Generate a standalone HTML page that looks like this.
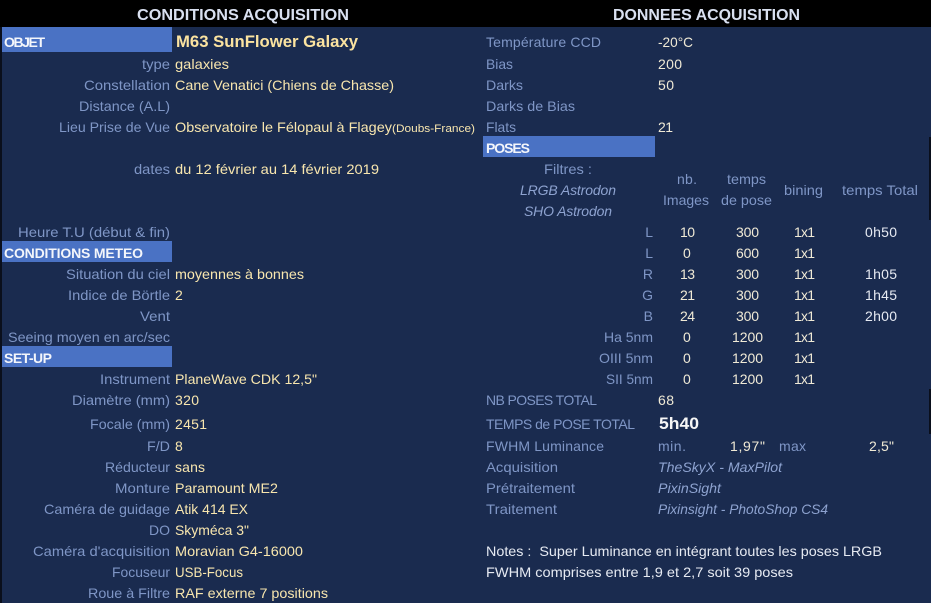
<!DOCTYPE html>
<html><head><meta charset="utf-8"><style>
html,body{margin:0;padding:0;background:#1a2b4f}
svg{display:block}
text{font-family:"Liberation Sans",sans-serif;font-size:14px}
.l{fill:#7f96c6}
.v{fill:#f8e6ae}
.w{fill:#f0ead6}
.n{fill:#e6eaf2}
.i{font-style:italic;fill:#8ea3d0}
.b{font-weight:bold;fill:#f4f6fb}
.t{font-weight:bold;fill:#d9e0f0;font-size:16px}
</style></head><body>
<svg width="931" height="603" viewBox="0 0 931 603" xmlns="http://www.w3.org/2000/svg">
<rect width="931" height="603" fill="#1a2b4f"/>
<rect width="931" height="27" fill="#000"/>
<rect x="0" y="27" width="2" height="576" fill="#0a0f1c"/>
<rect x="929" y="137" width="2" height="83" fill="#0a0f1c"/>
<rect x="929" y="389" width="2" height="45" fill="#0a0f1c"/>
<rect x="2" y="27" width="170" height="25" fill="#4a72c4"/>
<rect x="2" y="241" width="170" height="21" fill="#4a72c4"/>
<rect x="2" y="346" width="170" height="21" fill="#4a72c4"/>
<rect x="483" y="136" width="172" height="21" fill="#4a72c4"/>

<text class="t" x="137" y="20" textLength="212" lengthAdjust="spacingAndGlyphs">CONDITIONS ACQUISITION</text>
<text class="t" x="613" y="20" textLength="187" lengthAdjust="spacingAndGlyphs">DONNEES ACQUISITION</text>

<text class="b" x="4" y="47" textLength="41" lengthAdjust="spacing">OBJET</text>
<text class="b" x="4" y="258" textLength="139" lengthAdjust="spacing">CONDITIONS METEO</text>
<text class="b" x="4" y="363" textLength="48" lengthAdjust="spacing">SET-UP</text>
<text class="b" x="486" y="153" textLength="44" lengthAdjust="spacing">POSES</text>

<text x="176" y="47" textLength="182" lengthAdjust="spacingAndGlyphs" style="font-weight:bold;font-size:17px;fill:#fbe3a0">M63 SunFlower Galaxy</text>

<text class="l" x="142" y="69" textLength="28" lengthAdjust="spacingAndGlyphs">type</text>
<text class="l" x="84" y="90" textLength="86" lengthAdjust="spacingAndGlyphs">Constellation</text>
<text class="l" x="79" y="111" textLength="91" lengthAdjust="spacingAndGlyphs">Distance (A.L)</text>
<text class="l" x="59" y="132" textLength="111" lengthAdjust="spacingAndGlyphs">Lieu Prise de Vue</text>
<text class="l" x="134" y="174" textLength="36" lengthAdjust="spacingAndGlyphs">dates</text>
<text class="l" x="18" y="237" textLength="152" lengthAdjust="spacingAndGlyphs">Heure T.U (début &amp; fin)</text>
<text class="l" x="66" y="279" textLength="104" lengthAdjust="spacingAndGlyphs">Situation du ciel</text>
<text class="l" x="68" y="300" textLength="102" lengthAdjust="spacingAndGlyphs">Indice de Börtle</text>
<text class="l" x="140" y="321" textLength="30" lengthAdjust="spacingAndGlyphs">Vent</text>
<text class="l" x="8" y="342" textLength="162" lengthAdjust="spacingAndGlyphs">Seeing moyen en arc/sec</text>
<text class="l" x="100" y="384" textLength="70" lengthAdjust="spacingAndGlyphs">Instrument</text>
<text class="l" x="72" y="405" textLength="98" lengthAdjust="spacingAndGlyphs">Diamètre (mm)</text>
<text class="l" x="90" y="429" textLength="80" lengthAdjust="spacingAndGlyphs">Focale (mm)</text>
<text class="l" x="147" y="451" textLength="23" lengthAdjust="spacingAndGlyphs">F/D</text>
<text class="l" x="105" y="472" textLength="65" lengthAdjust="spacingAndGlyphs">Réducteur</text>
<text class="l" x="115" y="493" textLength="55" lengthAdjust="spacingAndGlyphs">Monture</text>
<text class="l" x="44" y="514" textLength="126" lengthAdjust="spacingAndGlyphs">Caméra de guidage</text>
<text class="l" x="149" y="535" textLength="21" lengthAdjust="spacing">DO</text>
<text class="l" x="33" y="556" textLength="137" lengthAdjust="spacingAndGlyphs">Caméra d'acquisition</text>
<text class="l" x="112" y="577" textLength="58" lengthAdjust="spacingAndGlyphs">Focuseur</text>
<text class="l" x="88" y="598" textLength="82" lengthAdjust="spacingAndGlyphs">Roue à Filtre</text>

<text class="v" x="175" y="69" textLength="54" lengthAdjust="spacingAndGlyphs">galaxies</text>
<text class="v" x="175" y="90" textLength="219" lengthAdjust="spacingAndGlyphs">Cane Venatici (Chiens de Chasse)</text>
<text class="v" x="175" y="132" textLength="217" lengthAdjust="spacingAndGlyphs">Observatoire le Félopaul à Flagey</text>
<text class="v" x="392" y="132" textLength="83" lengthAdjust="spacingAndGlyphs" style="font-size:11px">(Doubs-France)</text>
<text class="v" x="175" y="174" textLength="204" lengthAdjust="spacingAndGlyphs">du 12 février au 14 février 2019</text>
<text class="v" x="175" y="279" textLength="129" lengthAdjust="spacingAndGlyphs">moyennes à bonnes</text>
<text class="v" x="175" y="300">2</text>
<text class="v" x="175" y="384" textLength="142" lengthAdjust="spacingAndGlyphs">PlaneWave CDK 12,5"</text>
<text class="v" x="175" y="405" textLength="24" lengthAdjust="spacing">320</text>
<text class="v" x="175" y="429" textLength="32" lengthAdjust="spacing">2451</text>
<text class="v" x="175" y="451">8</text>
<text class="v" x="175" y="472" textLength="30" lengthAdjust="spacing">sans</text>
<text class="v" x="175" y="493" textLength="103" lengthAdjust="spacingAndGlyphs">Paramount ME2</text>
<text class="v" x="175" y="514" textLength="73" lengthAdjust="spacingAndGlyphs">Atik 414 EX</text>
<text class="v" x="175" y="535" textLength="74" lengthAdjust="spacingAndGlyphs">Skyméca 3"</text>
<text class="v" x="175" y="556" textLength="128" lengthAdjust="spacingAndGlyphs">Moravian G4-16000</text>
<text class="v" x="175" y="577" textLength="68" lengthAdjust="spacingAndGlyphs">USB-Focus</text>
<text class="v" x="175" y="598" textLength="153" lengthAdjust="spacingAndGlyphs">RAF externe 7 positions</text>

<text class="l" x="486" y="47" textLength="115" lengthAdjust="spacing">Température CCD</text>
<text class="l" x="486" y="69" textLength="27" lengthAdjust="spacingAndGlyphs">Bias</text>
<text class="l" x="486" y="90" textLength="37" lengthAdjust="spacingAndGlyphs">Darks</text>
<text class="l" x="486" y="111" textLength="89" lengthAdjust="spacingAndGlyphs">Darks de Bias</text>
<text class="l" x="486" y="132" textLength="30" lengthAdjust="spacingAndGlyphs">Flats</text>
<text class="w" x="658" y="47" textLength="35" lengthAdjust="spacingAndGlyphs">-20°C</text>
<text class="w" x="658" y="69" textLength="24" lengthAdjust="spacing">200</text>
<text class="w" x="658" y="90" textLength="16" lengthAdjust="spacing">50</text>
<text class="w" x="658" y="132" textLength="15" lengthAdjust="spacing">21</text>

<text class="l" x="544" y="174" textLength="48" lengthAdjust="spacingAndGlyphs">Filtres :</text>
<text class="i" x="520" y="195" textLength="96" lengthAdjust="spacing">LRGB Astrodon</text>
<text class="i" x="524" y="216" textLength="88" lengthAdjust="spacing">SHO Astrodon</text>
<text class="l" x="677" y="184" textLength="20" lengthAdjust="spacing">nb.</text>
<text class="l" x="663" y="205" textLength="46" lengthAdjust="spacingAndGlyphs">Images</text>
<text class="l" x="727" y="184" textLength="39" lengthAdjust="spacingAndGlyphs">temps</text>
<text class="l" x="721" y="205" textLength="51" lengthAdjust="spacingAndGlyphs">de pose</text>
<text class="l" x="784" y="195" textLength="39" lengthAdjust="spacingAndGlyphs">bining</text>
<text class="l" x="842" y="195" textLength="76" lengthAdjust="spacingAndGlyphs">temps Total</text>

<text class="l" x="653" y="237" text-anchor="end">L</text>
<text class="l" x="653" y="258" text-anchor="end">L</text>
<text class="l" x="653" y="279" text-anchor="end">R</text>
<text class="l" x="653" y="300" text-anchor="end">G</text>
<text class="l" x="653" y="321" text-anchor="end">B</text>
<text class="l" x="604" y="342" textLength="49" lengthAdjust="spacingAndGlyphs">Ha 5nm</text>
<text class="l" x="599" y="363" textLength="54" lengthAdjust="spacingAndGlyphs">OIII 5nm</text>
<text class="l" x="606" y="384" textLength="47" lengthAdjust="spacingAndGlyphs">SII 5nm</text>

<text class="w" x="680" y="237" textLength="15" lengthAdjust="spacing">10</text>
<text class="w" x="683" y="258">0</text>
<text class="w" x="680" y="279" textLength="15" lengthAdjust="spacing">13</text>
<text class="w" x="680" y="300" textLength="15" lengthAdjust="spacing">21</text>
<text class="w" x="680" y="321" textLength="15" lengthAdjust="spacing">24</text>
<text class="w" x="683" y="342">0</text>
<text class="w" x="683" y="363">0</text>
<text class="w" x="683" y="384">0</text>

<text class="w" x="736" y="237" textLength="23" lengthAdjust="spacing">300</text>
<text class="w" x="736" y="258" textLength="23" lengthAdjust="spacing">600</text>
<text class="w" x="736" y="279" textLength="23" lengthAdjust="spacing">300</text>
<text class="w" x="736" y="300" textLength="23" lengthAdjust="spacing">300</text>
<text class="w" x="736" y="321" textLength="23" lengthAdjust="spacing">300</text>
<text class="w" x="732" y="342" textLength="31" lengthAdjust="spacing">1200</text>
<text class="w" x="732" y="363" textLength="31" lengthAdjust="spacing">1200</text>
<text class="w" x="732" y="384" textLength="31" lengthAdjust="spacing">1200</text>

<text class="w" x="794" y="237" textLength="21" lengthAdjust="spacing">1x1</text>
<text class="w" x="794" y="258" textLength="21" lengthAdjust="spacing">1x1</text>
<text class="w" x="794" y="279" textLength="21" lengthAdjust="spacing">1x1</text>
<text class="w" x="794" y="300" textLength="21" lengthAdjust="spacing">1x1</text>
<text class="w" x="794" y="321" textLength="21" lengthAdjust="spacing">1x1</text>
<text class="w" x="794" y="342" textLength="21" lengthAdjust="spacing">1x1</text>
<text class="w" x="794" y="363" textLength="21" lengthAdjust="spacing">1x1</text>
<text class="w" x="794" y="384" textLength="21" lengthAdjust="spacing">1x1</text>

<text class="n" x="865" y="237" textLength="32" lengthAdjust="spacing">0h50</text>
<text class="n" x="865" y="279" textLength="32" lengthAdjust="spacing">1h05</text>
<text class="n" x="865" y="300" textLength="32" lengthAdjust="spacing">1h45</text>
<text class="n" x="865" y="321" textLength="32" lengthAdjust="spacing">2h00</text>

<text class="l" x="486" y="405" textLength="111" lengthAdjust="spacing">NB POSES TOTAL</text>
<text class="l" x="486" y="429" textLength="149" lengthAdjust="spacing">TEMPS de POSE TOTAL</text>
<text class="l" x="486" y="451" textLength="118" lengthAdjust="spacing">FWHM Luminance</text>
<text class="l" x="486" y="472" textLength="72" lengthAdjust="spacingAndGlyphs">Acquisition</text>
<text class="l" x="486" y="493" textLength="89" lengthAdjust="spacingAndGlyphs">Prétraitement</text>
<text class="l" x="486" y="514" textLength="71" lengthAdjust="spacingAndGlyphs">Traitement</text>
<text class="w" x="658" y="405" textLength="16" lengthAdjust="spacing">68</text>
<text x="659" y="429" textLength="40" lengthAdjust="spacingAndGlyphs" style="font-weight:bold;font-size:17px;fill:#f6f6f6">5h40</text>
<text class="l" x="658" y="451" textLength="28" lengthAdjust="spacing">min.</text>
<text class="w" x="730" y="451" textLength="35" lengthAdjust="spacing">1,97"</text>
<text class="l" x="779" y="451" textLength="27" lengthAdjust="spacing">max</text>
<text class="w" x="869" y="451" textLength="25" lengthAdjust="spacing">2,5"</text>
<text class="i" x="658" y="472" textLength="124" lengthAdjust="spacingAndGlyphs">TheSkyX - MaxPilot</text>
<text class="i" x="658" y="493" textLength="63" lengthAdjust="spacingAndGlyphs">PixinSight</text>
<text class="i" x="658" y="514" textLength="170" lengthAdjust="spacingAndGlyphs">Pixinsight - PhotoShop CS4</text>
<text class="n" x="486" y="556" textLength="396" lengthAdjust="spacingAndGlyphs" xml:space="preserve">Notes :  Super Luminance en intégrant toutes les poses LRGB</text>
<text class="n" x="486" y="577" textLength="307" lengthAdjust="spacingAndGlyphs">FWHM comprises entre 1,9 et 2,7 soit 39 poses</text>
</svg>
</body></html>
